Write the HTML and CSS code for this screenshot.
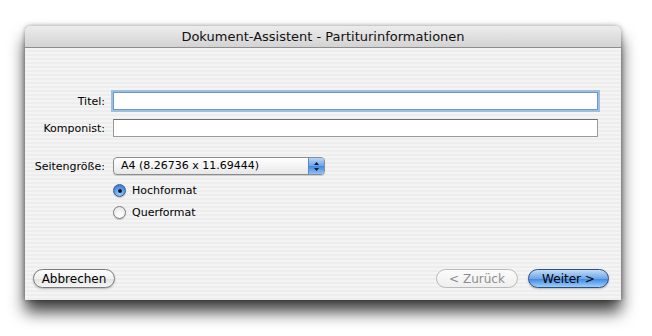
FILE: index.html
```html
<!DOCTYPE html>
<html lang="de">
<head>
    <meta charset="UTF-8">
    <title>Dokument-Assistent</title>
    <link rel="stylesheet" href="styles.css">
</head>
<body>
    <div class="window">
        <div class="titlebar">Dokument-Assistent - Partiturinformationen</div>
        <div class="content">
            <form class="fields">
                <label for="titel">Titel:</label>
                <input type="text" id="titel" class="text-field focused">

                <label for="komponist">Komponist:</label>
                <input type="text" id="komponist" class="text-field">

                <label class="spaced">Seitengröße:</label>
                <div class="popup spaced">
                    <span class="popup-value">A4 (8.26736 x 11.69444)</span>
                    <span class="popup-arrows">
                        <svg width="7" height="11" viewBox="0 0 7 11"><path d="M3.5 1 L6 4 H1 Z M3.5 10 L6 7 H1 Z" fill="#0b1a33"/></svg>
                    </span>
                </div>

                <span></span>
                <div class="radios">
                    <div class="radio-row"><span class="radio checked"></span>Hochformat</div>
                    <div class="radio-row"><span class="radio"></span>Querformat</div>
                </div>
            </form>

            <div class="buttons">
                <button type="button" class="btn">Abbrechen</button>
                <span class="spacer"></span>
                <button type="button" class="btn disabled">&lt; Zurück</button>
                <button type="button" class="btn default">Weiter &gt;</button>
            </div>
        </div>
    </div>
</body>
</html>
```

FILE: styles.css
```css
/* page */
html, body {
    height: 100%;
}

body {
    margin: 0;
    padding: 26px 0 0 25px;
    box-sizing: border-box;
    background-color: #fff;
    font-family: "DejaVu Sans", "Liberation Sans", sans-serif;
    font-size: 11px;
    color: #000;
}

/* window */
.window {
    width: 596px;
    height: 274px;
    display: flex;
    flex-direction: column;
    border-radius: 6px 6px 0 0;
    box-shadow: 0 12px 16px rgba(0, 0, 0, 0.75), 0 0 5px rgba(0, 0, 0, 0.4);
    background: repeating-linear-gradient(#ededed 0 2px, #f4f4f4 2px 4px);
}

.titlebar {
    height: 21px;
    border-bottom: 1px solid #8e8e8e;
    border-radius: 6px 6px 0 0;
    background: linear-gradient(#ececec, #d3d3d3);
    font-size: 13px;
    line-height: 22px;
    text-align: center;
    color: #111;
}

.content {
    flex: 1;
    display: flex;
    flex-direction: column;
    padding: 44px 12px 12px 8px;
}

/* form grid */
.fields {
    display: grid;
    grid-template-columns: 72px 1fr;
    column-gap: 8px;
    row-gap: 9px;
    align-items: center;
    margin-right: 11px;
}

.fields label {
    text-align: right;
}

.spaced {
    margin-top: 11px;
}

.text-field {
    height: 18px;
    box-sizing: border-box;
    border: 1px solid #9a9a9a;
    border-top-color: #6f6f6f;
    background: #fff;
    margin: 0;
    font: inherit;
}

.text-field.focused {
    border-color: #6e98c8;
    box-shadow: 0 0 0 2px #9dbfe4;
}

/* popup menu */
.popup {
    width: 212px;
    height: 18px;
    box-sizing: border-box;
    display: flex;
    border: 1px solid #8c8c8c;
    border-radius: 4px;
    background: linear-gradient(#fff, #f4f4f4 50%, #e7e7e7);
    box-shadow: 0 1px 1px rgba(0, 0, 0, 0.15);
    overflow: hidden;
}

.popup-value {
    flex: 1;
    padding-left: 7px;
    line-height: 16px;
}

.popup-arrows {
    width: 15px;
    display: flex;
    align-items: center;
    justify-content: center;
    border-left: 1px solid #5c86c0;
    background: linear-gradient(#b9d6f7, #6aa3e8 50%, #3f86e0 51%, #8fc3f8);
}

/* radios */
.radios {
    display: flex;
    flex-direction: column;
    gap: 9px;
}

.radio-row {
    display: flex;
    align-items: center;
    gap: 6px;
    height: 13px;
}

.radio {
    width: 11px;
    height: 11px;
    border-radius: 50%;
    border: 1px solid #7a7a7a;
    background: radial-gradient(circle at 50% 70%, #fff, #e3e3e3);
    box-shadow: 0 1px 1px rgba(0, 0, 0, 0.2);
    display: flex;
    align-items: center;
    justify-content: center;
}

.radio.checked {
    border-color: #3b5f94;
    background: radial-gradient(circle at 50% 75%, #a9d2fb, #4d8fe0 60%, #2f6cc7);
}

.radio.checked::after {
    content: "";
    width: 4px;
    height: 4px;
    border-radius: 50%;
    background: #0d1a2a;
}

/* buttons */
.buttons {
    margin-top: auto;
    display: flex;
    align-items: center;
    gap: 10px;
}

.spacer {
    flex: 1;
}

.btn {
    height: 19px;
    width: 82px;
    padding: 0;
    border: 1px solid #7b7b7b;
    border-radius: 10px;
    background: linear-gradient(#fdfdfd, #f0f0f0 50%, #e2e2e2 51%, #f6f6f6);
    box-shadow: 0 1px 2px rgba(0, 0, 0, 0.25);
    font: inherit;
    font-size: 12px;
    color: #000;
}

.btn.disabled {
    border-color: #b9b9b9;
    color: #8d8d8d;
    box-shadow: none;
    background: linear-gradient(#fbfbfb, #efefef);
}

.btn.default {
    width: 81px;
    border-color: #2d4f86;
    background: linear-gradient(#c3dcf8, #6ea6e9 50%, #3b85e0 51%, #9fd0fb);
}
```
